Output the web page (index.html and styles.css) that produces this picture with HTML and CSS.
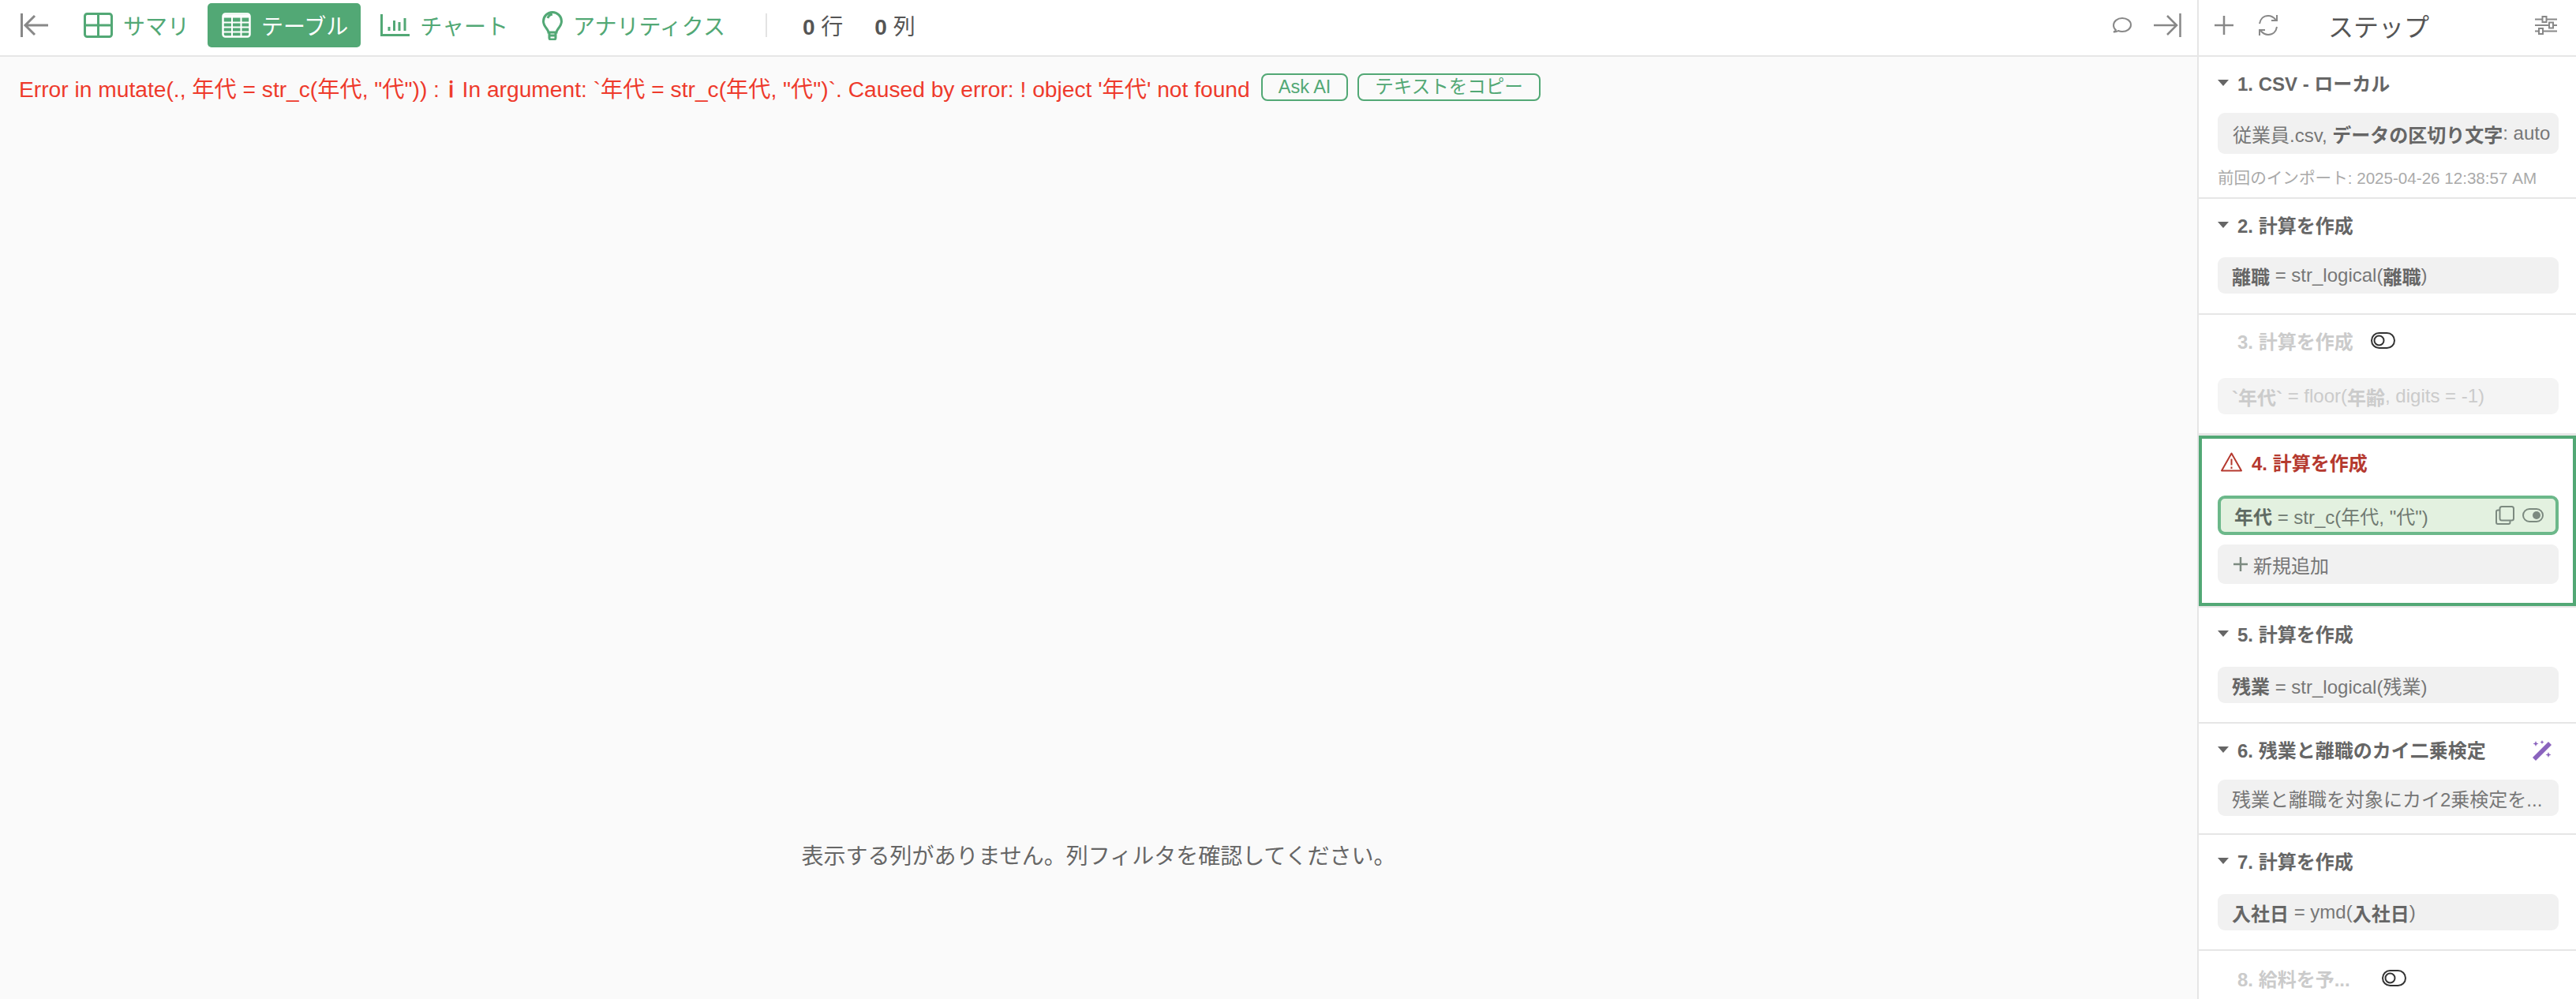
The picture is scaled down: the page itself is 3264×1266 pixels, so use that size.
FILE: index.html
```html
<!DOCTYPE html>
<html lang="ja">
<head>
  <meta charset="UTF-8">
  <title>テーブル</title>
  <link rel="stylesheet" href="styles.css">
</head>
<body>
<div class="app">
  <main class="main">
    <header class="toolbar">
      <svg class="icon back" width="36" height="30" viewBox="0 0 36 30"><path d="M1.500 0v30M35 15H7M18 3 6 15l12 12"/></svg>
      <nav class="tabs">
        <div class="tab">
          <svg class="icon" width="37" height="32" viewBox="0 0 37 32"><rect x="1.500" y="1.500" width="34" height="29" rx="3"/><path d="M18.500 2v28M2 16h33"/></svg>
          <span>サマリ</span>
        </div>
        <div class="tab active">
          <svg class="icon" width="37" height="32" viewBox="0 0 37 32"><rect x="1.500" y="1.500" width="34" height="29" rx="3"/><path class="band" d="M2 4.500h33"/><path class="grid-lines" d="M2 12.500h33M2 18.500h33M2 24.500h33M13 6v24M24.500 6v24"/></svg>
          <span>テーブル</span>
        </div>
        <div class="tab">
          <svg class="icon" width="37" height="28" viewBox="0 0 37 28"><path d="M1.500 0v26.500H37M11 21v-5M17.500 21V8M24 21V10M31 21V5"/></svg>
          <span>チャート</span>
        </div>
        <div class="tab insight">
          <svg class="icon" width="26" height="37" viewBox="0 0 26 37"><path d="M8 27c0-4-6.500-7-6.500-14a11.500 11.500 0 0 1 23 0c0 7-6.500 10-6.500 14zM7 9c1-3 3-4.500 6-5M8 31h10M9 27v7a2 2 0 0 0 2 2h4a2 2 0 0 0 2-2v-7"/></svg>
          <span>アナリティクス</span>
        </div>
      </nav>
      <div class="sep"></div>
      <div class="stats">
        <span class="stat"><b>0</b> 行</span>
        <span class="stat"><b>0</b> 列</span>
      </div>
      <div class="tools">
        <svg class="icon grey thin" width="24" height="20" viewBox="0 0 24 20"><path d="M1 18.500c1.500-.5 2.500-1 3-2.500C2 14.500 1 12.500 1 10 1 5 6 1 12 1s11 3.500 11 8.500S18 18 12 18c-2 0-3.500-.4-5-1-2 1.300-4 1.700-6 1.500z"/></svg>
        <svg class="icon grey" width="35" height="30" viewBox="0 0 35 30"><path d="M33.500 0v30M0 15h28M17 3l12 12-12 12"/></svg>
      </div>
    </header>
    <div class="error-row">
      <span class="error-text">Error in mutate(., 年代 = str_c(年代, "代")) : <b class="info">ℹ</b> In argument: `年代 = str_c(年代, "代")`. Caused by error: ! object '年代' not found</span>
      <button class="btn-outline">Ask AI</button>
      <button class="btn-outline">テキストをコピー</button>
    </div>
    <div class="empty">表示する列がありません。列フィルタを確認してください。</div>
  </main>

  <aside class="steps">
    <header class="steps-head">
      <svg class="icon grey" width="24" height="24" viewBox="0 0 24 24"><path d="M12 0v24M0 12h24"/></svg>
      <svg class="icon grey thin refresh" width="28" height="28" viewBox="0 0 28 28"><path d="M3 12C4 6 8 2 14 2c4 0 7 2 9.500 5M25 1v7h-7M25 16c-1 6-5 10-11 10-4 0-7-2-9.500-5M3 27v-7h7"/></svg>
      <span class="steps-title">ステップ</span>
      <svg class="icon grey thin sliders" width="28" height="24" viewBox="0 0 28 24"><path d="M0 4.500h28M0 12h28M0 19.500h28"/><rect class="knob" x="9.500" y="1" width="5" height="7"/><rect class="knob" x="18" y="8.500" width="5" height="7"/><rect class="knob" x="5" y="16" width="5" height="7"/></svg>
    </header>

    <section class="step first tight">
      <h4 class="step-title"><i class="caret"></i><span>1. CSV - ローカル</span></h4>
      <div class="pill tall">従業員.csv, <b>データの区切り文字</b>: auto</div>
      <p class="imported">前回のインポート: 2025-04-26 12:38:57 AM</p>
    </section>

    <section class="step second">
      <h4 class="step-title"><i class="caret"></i><span>2. 計算を作成</span></h4>
      <div class="pill"><b>離職</b> = str_logical(<b>離職</b>)</div>
    </section>

    <section class="step off loose">
      <h4 class="step-title"><i class="caret none"></i><span>3. 計算を作成</span><svg class="toggle" width="31" height="21" viewBox="0 0 31 21"><rect x="1" y="1" width="29" height="19" rx="9.500"/><circle cx="10.500" cy="10.500" r="6"/></svg></h4>
      <div class="pill"><b>`年代`</b> = floor(<b>年齢</b>, digits = -1)</div>
    </section>

    <section class="step current">
      <h4 class="step-title error"><svg class="warn" width="27" height="25" viewBox="0 0 27 25"><path d="M13.500 1.500 1 23.500h25zM13.500 8.500v8M13.500 18.500v2.500"/></svg><span>4. 計算を作成</span></h4>
      <div class="pill selected">
        <span><b>年代</b> = str_c(年代, "代")</span>
        <span class="pill-icons">
          <svg class="icon dim thin" width="24" height="24" viewBox="0 0 24 24"><rect x="5.500" y="1" width="17.500" height="17.500" rx="2.500"/><path d="M5 5.500H3A2 2 0 0 0 1 7.500V21a2 2 0 0 0 2 2h13.500a2 2 0 0 0 2-2v-2"/></svg>
          <svg class="icon dim thin" width="27" height="18" viewBox="0 0 27 18"><rect x="1" y="1" width="25" height="16" rx="8"/><circle class="dot" cx="18" cy="9" r="5"/></svg>
        </span>
      </div>
      <div class="pill add"><svg class="icon dim" width="18" height="18" viewBox="0 0 18 18"><path d="M9 0v18M0 9h18"/></svg><span>新規追加</span></div>
    </section>

    <section class="step">
      <h4 class="step-title"><i class="caret"></i><span>5. 計算を作成</span></h4>
      <div class="pill"><b>残業</b> = str_logical(残業)</div>
    </section>

    <section class="step tight sixth">
      <h4 class="step-title"><i class="caret"></i><span>6. 残業と離職のカイ二乗検定</span><svg class="wand" width="25" height="26" viewBox="0 0 25 26"><path class="wand-stick" d="M0 22 20 2l4 4L4 26z"/><path class="wand-star" d="m4 1 1 2.500 2.500 1L5 5.500 4 8 3 5.500.5 4.500 3 3.500zM12 0l.8 1.700 1.700.8-1.700.8L12 5l-.8-1.700-1.700-.8 1.700-.8zM20 15l1 2.500 2.500 1-2.500 1L20 22l-1-2.500-2.500-1 2.500-1z"/></svg></h4>
      <div class="pill">残業と離職を対象にカイ2乗検定を...</div>
    </section>

    <section class="step">
      <h4 class="step-title"><i class="caret"></i><span>7. 計算を作成</span></h4>
      <div class="pill"><b>入社日</b> = ymd(<b>入社日</b>)</div>
    </section>

    <section class="step off last">
      <h4 class="step-title"><i class="caret none"></i><span>8. 給料を予...</span><svg class="toggle far" width="31" height="21" viewBox="0 0 31 21"><rect x="1" y="1" width="29" height="19" rx="9.500"/><circle cx="10.500" cy="10.500" r="6"/></svg></h4>
    </section>
  </aside>
</div>
</body>
</html>
```

FILE: styles.css
```css
* { margin: 0; padding: 0; box-sizing: border-box; }
html, body { height: 100%; overflow: hidden; }
body { font-family: "Liberation Sans", "Noto Sans CJK JP", sans-serif; color: #555; background: #fff; }
.app { display: flex; height: 100vh; }

.icon { fill: none; stroke: #52a875; stroke-width: 3; flex: none; }
.icon.grey { stroke: #888; stroke-width: 2.5; }
.icon.dim { stroke: #7c8a80; stroke-width: 2.5; }
.icon.thin { stroke-width: 2; }

/* main area */
.main { flex: 1; min-width: 0; background: #fafafa; display: flex; flex-direction: column; }
.toolbar { height: 72px; background: #fff; border-bottom: 2px solid #e6e6e6; display: flex; align-items: center; padding: 0 20px 6px 26px; flex: none; }
.back { stroke: #888; }
.tabs { display: flex; align-items: center; gap: 9px; margin-left: 26px; }
.tab { height: 56px; padding: 0 14px 0 18px; display: flex; align-items: center; gap: 13px; border-radius: 5px; color: #52a875; font-size: 28px; }
.tab.insight { margin-left: 2px; }
.tab.active { background: #52a875; color: #fff; padding-right: 16px; margin-right: -2px; }
.tab.active .icon { stroke: #fff; stroke-width: 2.5; }
.tab.active .band { stroke-width: 4; }
.tab.active .grid-lines { stroke-width: 2; }
.sep { width: 2px; height: 30px; background: #e3e3e3; margin-left: 37px; }
.stats { display: flex; gap: 40px; margin-left: 45px; font-size: 28px; color: #555; }
.tools { margin-left: auto; display: flex; align-items: center; gap: 28px; }

.error-row { display: flex; align-items: center; gap: 12px; padding: 18px 24px 0; color: #ee3a2c; font-size: 28.200px; white-space: nowrap; }
.error-text { margin-right: 2px; }
.info { font-family: "DejaVu Serif", serif; margin: 0 3px; }
.btn-outline { height: 35px; padding: 0 20px; background: transparent; border: 2px solid #52a875; border-radius: 8px; color: #52a875; font: 23.500px "Liberation Sans", "Noto Sans CJK JP", sans-serif; line-height: 1; }
.empty { margin-top: 932px; text-align: center; font-size: 28px; color: #666; }

/* steps panel */
.steps { width: 480px; flex: none; border-left: 2px solid #e6e6e6; background: #fff; overflow: hidden; }
.steps-head { height: 72px; border-bottom: 2px solid #e6e6e6; display: flex; align-items: center; padding: 0 24px 6px 20px; }
.refresh { margin-left: 30px; }
.steps-title { margin-left: 62px; font-size: 32px; color: #555; }
.sliders { margin-left: auto; }
.knob { fill: #fff; }

.step { padding: 17px 22px 24px 24px; border-bottom: 2px solid #e6e6e6; }
.step.first { padding-bottom: 12px; }
.step.second { padding-bottom: 25px; }
.step.sixth { padding-bottom: 22px; }
.step.last { border-bottom: 0; padding-top: 19px; }
.step-title { height: 36px; padding-bottom: 5px; display: flex; align-items: center; font-size: 24px; font-weight: 700; color: #666; white-space: nowrap; margin-bottom: 22px; position: relative; }
.step.tight .step-title { margin-bottom: 18px; }
.step.loose .step-title { margin-bottom: 27px; }
.step.second .step-title { margin-bottom: 21px; }
.step.off .step-title { color: #cbcbcb; }
.step.off .pill { color: #cbcbcb; background: #f4f4f4; }
.caret { width: 0; height: 0; border-left: 7.500px solid transparent; border-right: 7.500px solid transparent; border-top: 8px solid #666; margin-right: 11px; flex: none; }
.caret.none { visibility: hidden; }

.pill { height: 46px; padding: 0 18px; border-radius: 9px; background: #f1f1f1; color: #777; font-size: 24px; display: flex; align-items: center; white-space: pre; overflow: hidden; }
.pill b { color: #666; }
.step.off .pill b { color: #cbcbcb; }
.pill.tall { height: 52px; padding: 0 0 0 19px; }
.imported { margin-top: 19px; font-size: 20.600px; line-height: 24px; color: #aaa; white-space: nowrap; }

.toggle { margin-left: 22px; fill: none; stroke: #333; stroke-width: 2; }
.toggle.far { margin-left: 40px; }
.wand { position: absolute; right: 8px; top: 4px; }
.wand-stick, .wand-star { fill: #8a63bd; }

.step.current { border: 4px solid #52a875; margin-top: 1px; padding: 14px 18px 24px 20px; margin-bottom: 2px; box-shadow: 0 -1px 0 #e6e6e6, 0 2px 0 #e6e6e6; }
.step-title.error { color: #b5392f; margin-bottom: 22px; }
.warn { fill: none; stroke: #b5392f; stroke-width: 2; stroke-linejoin: round; margin: 0 12px 0 4px; flex: none; }
.pill.selected { height: 50px; padding: 0 15px 0 17px; border: 4px solid #6cb88a; background: #e3f1e0; justify-content: space-between; color: #707a72; }
.pill.selected b { color: #5f6a62; }
.pill-icons { display: flex; align-items: center; gap: 10px; }
.dot { fill: #7c8a80; stroke: none; }
.pill.add { height: 50px; margin-top: 12px; padding-left: 20px; gap: 7px; }
```
